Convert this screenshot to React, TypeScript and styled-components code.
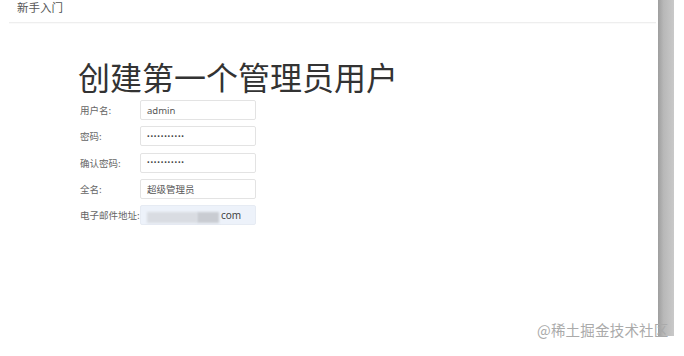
import React from "react";
import styled, { createGlobalStyle } from "styled-components";

const GlobalStyle = createGlobalStyle`
  html, body {
    margin: 0;
    padding: 0;
    background: #ffffff;
  }
  body {
    font-family: "Noto Sans CJK SC", "Noto Sans", sans-serif;
    color: #333;
  }
`;

const Page = styled.div`
  position: relative;
  width: 684px;
  height: 356px;
  display: flex;
  overflow: hidden;
  background: #fff;
`;

const Main = styled.main`
  width: 658px;
  display: flex;
  flex-direction: column;
`;

const Header = styled.header`
  margin-left: 9px;
  width: 647px;
  height: 22px;
  border-bottom: 1px solid #eeeeee;
  box-shadow: 0 1px 1px rgba(0, 0, 0, 0.02);
`;

const HeaderTitle = styled.span`
  display: block;
  padding-left: 8px;
  margin-top: -1px;
  font-size: 11.5px;
  line-height: 16px;
  color: #555;
`;

const Content = styled.section`
  padding: 33px 0 0 78px;
  display: flex;
  flex-direction: column;
`;

const Title = styled.h1`
  margin: 0 0 4px;
  font-size: 32px;
  font-weight: 400;
  line-height: 40px;
  color: #333;
  letter-spacing: 0;
`;

const Form = styled.form`
  padding-left: 2px;
  display: grid;
  grid-template-columns: 60px 116px;
  grid-auto-rows: 20px;
  row-gap: 6.3px;
  align-items: center;
`;

const Label = styled.label`
  font-size: 9.5px;
  color: #666;
  white-space: nowrap;
`;

const Field = styled.div<{ $autofill?: boolean }>`
  box-sizing: border-box;
  height: 20px;
  border: 1px solid ${({ $autofill }) => ($autofill ? "#e6ebf3" : "#e3e3e3")};
  border-radius: 2px;
  background: ${({ $autofill }) => ($autofill ? "#edf2fa" : "#fff")};
  display: flex;
  align-items: center;
  padding-left: 6px;
  font-size: 9.5px;
  color: #555;
  font-family: "Noto Sans", "Noto Sans CJK SC", sans-serif;
`;

const Dots = styled.span`
  font-size: 7px;
  letter-spacing: 0.8px;
  color: #444;
  line-height: 1;
`;

const Blur = styled.span<{ $w: number; $tone: string }>`
  display: inline-block;
  height: 11px;
  width: ${({ $w }) => $w}px;
  background: ${({ $tone }) => $tone};
  filter: blur(1px);
  margin-top: 4px;
`;

const Domain = styled.span`
  margin-left: 2px;
  font-size: 10px;
  color: #444;
`;

const Scrollbar = styled.div`
  width: 16px;
  height: 336px;
  background: linear-gradient(to right, #9e9e9e 0%, #b8b8b8 35%, #c9c9c9 100%);
`;

const Watermark = styled.div`
  position: absolute;
  left: 537px;
  top: 320px;
  font-size: 14.5px;
  line-height: 20px;
  color: #aaaaaa;
  letter-spacing: 0.2px;
`;

const fields = [
  { label: "用户名:", value: "admin" },
  { label: "密码:", password: true },
  { label: "确认密码:", password: true },
  { label: "全名:", value: "超级管理员" },
];

export default function App() {
  return (
    <Page>
      <GlobalStyle />
      <Main>
        <Header>
          <HeaderTitle>新手入门</HeaderTitle>
        </Header>
        <Content>
          <Title>创建第一个管理员用户</Title>
          <Form>
            {fields.map((f) => (
              <React.Fragment key={f.label}>
                <Label>{f.label}</Label>
                <Field>
                  {f.password ? <Dots>•••••••••••</Dots> : f.value}
                </Field>
              </React.Fragment>
            ))}
            <Label>电子邮件地址:</Label>
            <Field $autofill>
              <Blur $w={50} $tone="#d9dce2" />
              <Blur $w={22} $tone="#c9ccd2" />
              <Domain>com</Domain>
            </Field>
          </Form>
        </Content>
      </Main>
      <Scrollbar />
      <Watermark>@稀土掘金技术社区</Watermark>
    </Page>
  );
}
